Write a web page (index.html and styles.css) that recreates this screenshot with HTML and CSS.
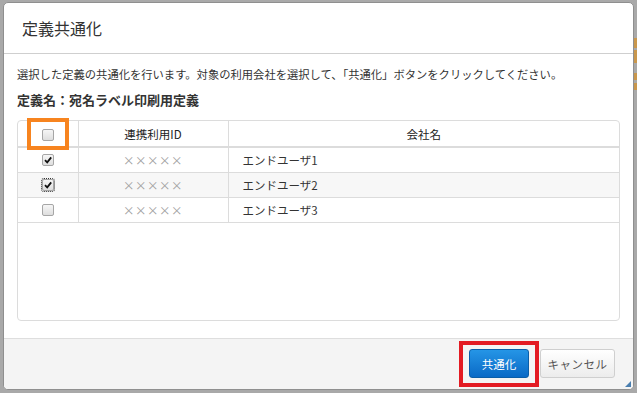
FILE: index.html
```html
<!DOCTYPE html>
<html lang="ja">
<head>
<meta charset="utf-8">
<title>定義共通化</title>
<link rel="stylesheet" href="styles.css">
</head>
<body>
<div class="dialog">
  <div class="dlg-header">定義共通化</div>
  <div class="dlg-body">
    <p class="desc">選択した定義の共通化を行います。対象の利用会社を選択して、「共通化」ボタンをクリックしてください。</p>
    <p class="defname">定義名：宛名ラベル印刷用定義</p>
    <div class="table-box">
      <table class="grid">
        <colgroup><col class="c-chk"><col class="c-id"><col></colgroup>
        <thead>
          <tr>
            <th class="chk"><span class="hl"><span class="cb"></span></span></th>
            <th>連携利用ID</th>
            <th>会社名</th>
          </tr>
        </thead>
        <tbody>
          <tr>
            <td class="chk"><span class="cb on"><svg viewBox="0 0 10 10"><path d="M2 5.2 L4.2 7.4 L8.2 2.4" /></svg></span></td>
            <td class="xid">×××××</td>
            <td class="name">エンドユーザ1</td>
          </tr>
          <tr class="alt">
            <td class="chk"><span class="cb on focus"><svg viewBox="0 0 10 10"><path d="M2 5.2 L4.2 7.4 L8.2 2.4" /></svg></span></td>
            <td class="xid">×××××</td>
            <td class="name">エンドユーザ2</td>
          </tr>
          <tr>
            <td class="chk"><span class="cb"></span></td>
            <td class="xid">×××××</td>
            <td class="name">エンドユーザ3</td>
          </tr>
        </tbody>
      </table>
    </div>
  </div>
  <div class="dlg-footer">
    <span class="hl-red"><button class="btn primary">共通化</button></span>
    <button class="btn cancel">キャンセル</button>
  </div>
  <span class="grip"></span>
</div>
</body>
</html>
```

FILE: styles.css
```css
html, body {
  margin: 0;
  padding: 0;
}
body {
  width: 637px;
  height: 393px;
  overflow: hidden;
  background-color: #a9a9a9;
  background-image: linear-gradient(to bottom,
    transparent 38px, #c9974c 38px, #c9974c 48px, transparent 48px,
    transparent 50px, #c9974c 50px, #c9974c 63px, transparent 63px,
    transparent 73px, #c9974c 73px, #c9974c 80px, transparent 80px,
    transparent 83px, #c9974c 83px, #c9974c 90px, transparent 90px);
  background-size: 3px 100%;
  background-position: right top;
  background-repeat: no-repeat;
  font-family: "Noto Sans CJK JP", "Noto Sans", sans-serif;
  color: #333;
  padding-top: 2px;
  padding-left: 3px;
  box-sizing: border-box;
}
.dialog {
  position: relative;
  width: 631px;
  height: 388px;
  box-sizing: border-box;
  background: #fff;
  border: 1px solid #8f8f8f;
  border-radius: 5px;
  display: flex;
  flex-direction: column;
  overflow: hidden;
}
.dlg-header {
  height: 50px;
  border-bottom: 1px solid #cfcfcf;
  display: flex;
  align-items: center;
  padding-left: 18px;
  font-size: 16px;
  color: #333;
  flex: none;
}
.dlg-body {
  flex: 1;
  padding: 12px 13px 0 13px;
}
.desc {
  margin: 0;
  font-size: 11.3px;
  line-height: 16px;
  color: #333;
  white-space: nowrap;
}
.defname {
  margin: 9px 0 0 0;
  font-size: 13px;
  line-height: 18px;
  font-weight: bold;
  color: #333;
}
.table-box {
  margin-top: 11px;
  height: 201px;
  box-sizing: border-box;
  border: 1px solid #dcdcdc;
  border-radius: 4px;
}
.grid {
  width: 100%;
  border-collapse: collapse;
  table-layout: fixed;
  font-size: 11.5px;
}
.c-chk { width: 60px; }
.c-id { width: 150px; }
.grid th {
  height: 25px;
  padding: 0;
  font-weight: normal;
  color: #222;
  border-bottom: 2px solid #dcdcdc;
  border-left: 1px solid #dcdcdc;
  text-align: center;
}
.grid td {
  height: 24px;
  padding: 0;
  border-bottom: 1px solid #dcdcdc;
  border-left: 1px solid #dcdcdc;
}
.grid th:first-child, .grid td:first-child {
  border-left: none;
}
.grid tr.alt td {
  background: #f7f7f7;
}
.chk {
  text-align: center;
  vertical-align: middle;
  line-height: 0;
}
.xid {
  text-align: center;
  color: #a0a0a0;
  letter-spacing: 0.5px;
}
.name {
  padding-left: 14px !important;
  color: #333;
}
.cb {
  display: inline-block;
  width: 12px;
  height: 12px;
  box-sizing: border-box;
  border: 1px solid #a6a6a6;
  border-radius: 2px;
  background: linear-gradient(#f6f6f6, #dedede);
  vertical-align: middle;
  position: relative;
}
.cb svg {
  position: absolute;
  left: 0;
  top: 0;
  width: 10px;
  height: 10px;
}
.cb svg path {
  fill: none;
  stroke: #111;
  stroke-width: 1.8;
}
.cb.focus {
  outline: 1px dotted #333;
  outline-offset: 0;
}
.hl {
  position: relative;
  display: inline-block;
  line-height: 0;
  top: 1px;
}
.hl::after {
  content: "";
  position: absolute;
  left: -15px;
  right: -15px;
  top: -11px;
  bottom: -9px;
  border: 4px solid #f7841f;
}
.dlg-footer {
  flex: none;
  height: 40px;
  border-top: 1px solid #dedede;
  background: #f4f4f4;
  display: flex;
  justify-content: flex-end;
  align-items: flex-start;
  padding: 10px 18px 0 0;
  gap: 11px;
}
.hl-red {
  position: relative;
  display: inline-block;
  line-height: 0;
}
.hl-red::after {
  content: "";
  position: absolute;
  left: -10px;
  right: -10px;
  top: -8px;
  bottom: -9px;
  border: 4px solid #e31b23;
  pointer-events: none;
}
.btn {
  height: 29px;
  box-sizing: border-box;
  border-radius: 3px;
  font-family: "Noto Sans CJK JP", "Noto Sans", sans-serif;
  font-size: 11.5px;
  padding: 0;
  border: 1px solid #cfcfcf;
  background: linear-gradient(#ffffff, #ececec);
  color: #555;
  cursor: pointer;
}
.btn.primary {
  width: 60px;
  color: #fff;
  border: 1px solid #0b5ea8;
  background: linear-gradient(#2595e6, #0a6ac6);
}
.btn.cancel {
  width: 75px;
  letter-spacing: 0.5px;
}
.grip {
  position: absolute;
  right: 2px;
  bottom: 2px;
  width: 0;
  height: 0;
  border-left: 6px solid transparent;
  border-bottom: 6px solid #4a7fb0;
}
```
